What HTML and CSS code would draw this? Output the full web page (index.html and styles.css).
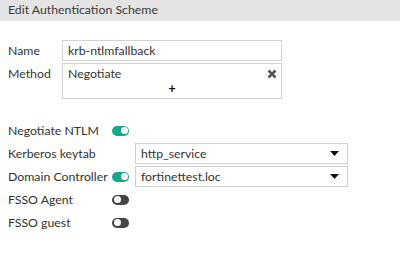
FILE: index.html
```html
<!DOCTYPE html>
<html lang="en-US">

<head>
    <meta charset="UTF-8">
    <meta name="viewport" content="width=device-width, initial-scale=1">
    <title>Edit Authentication Scheme</title>
    <link rel="stylesheet" href="styles.css">
</head>

<body>
    <div class="header">Edit Authentication Scheme</div>

    <div class="form">
        <div class="top">
            <label class="lbl">Name</label>
            <div class="input">krb-ntlmfallback</div>
            <label class="lbl">Method</label>
            <div class="multi">
                <div class="chip">
                    <span>Negotiate</span>
                    <svg class="remove" width="10" height="10" viewBox="0 0 10 10">
                        <path d="M1.5 1.5L8.5 8.5M8.5 1.5L1.5 8.5" />
                    </svg>
                </div>
                <div class="add">+</div>
            </div>
        </div>

        <div class="opts">
            <label class="lbl">Negotiate NTLM</label>
            <span class="toggle on"></span>
            <span></span>

            <label class="lbl">Kerberos keytab</label>
            <span></span>
            <div class="select">
                <span>http_service</span>
                <svg class="caret" width="9" height="5" viewBox="0 0 9 5"><path d="M0 0H9L4.5 5Z" /></svg>
            </div>

            <label class="lbl">Domain Controller</label>
            <span class="toggle on"></span>
            <div class="select">
                <span>fortinettest.loc</span>
                <svg class="caret" width="9" height="5" viewBox="0 0 9 5"><path d="M0 0H9L4.5 5Z" /></svg>
            </div>

            <label class="lbl">FSSO Agent</label>
            <span class="toggle"></span>
            <span></span>

            <label class="lbl">FSSO guest</label>
            <span class="toggle"></span>
            <span></span>
        </div>
    </div>
</body>

</html>
```

FILE: styles.css
```css
body {
    margin: 0;
    font-family: Lato, "Open Sans", sans-serif;
    font-size: 12.3px;
    color: #333;
    background: #fff;
}

/* Header bar */
.header {
    height: 20px;
    line-height: 20px;
    padding-left: 8px;
    background: #e4e4e4;
    border-bottom: 1px solid #ececec;
    color: #3a3a3a;
}

.form {
    padding: 19px 8px 0 8px;
}

.lbl {
    white-space: nowrap;
}

/* Name / method */
.top {
    display: grid;
    grid-template-columns: 54px 220px;
    row-gap: 2px;
    align-items: start;
}

.top .lbl {
    line-height: 21px;
}

.input {
    height: 21px;
    line-height: 19px;
    box-sizing: border-box;
    border: 1px solid #d2d2d2;
    padding-left: 5px;
}

.multi {
    height: 36px;
    box-sizing: border-box;
    border: 1px solid #d2d2d2;
    display: flex;
    flex-direction: column;
}

.chip {
    display: flex;
    justify-content: space-between;
    align-items: center;
    padding: 2px 4px 0 5px;
    line-height: 16px;
}

.remove {
    stroke: #555;
    stroke-width: 2.6;
}

.add {
    text-align: center;
    font-weight: bold;
    line-height: 14px;
    color: #111;
}

/* Options */
.opts {
    margin-top: 20px;
    display: grid;
    grid-template-columns: 104px 17px 219px;
    grid-auto-rows: 23px;
    align-items: center;
}

.opts .select {
    margin-left: 6px;
}

.toggle {
    width: 17px;
    height: 10px;
    border-radius: 5px;
    background: #444;
    position: relative;
}

.toggle::after {
    content: "";
    position: absolute;
    top: 1.5px;
    left: 1.5px;
    width: 7px;
    height: 7px;
    border-radius: 50%;
    background: #fff;
}

.toggle.on {
    background: #16a887;
}

.toggle.on::after {
    left: 8.5px;
}

.select {
    height: 21px;
    box-sizing: border-box;
    border: 1px solid #d2d2d2;
    display: flex;
    justify-content: space-between;
    align-items: center;
    padding: 0 8px 0 5px;
}

.caret {
    fill: #111;
}
```
